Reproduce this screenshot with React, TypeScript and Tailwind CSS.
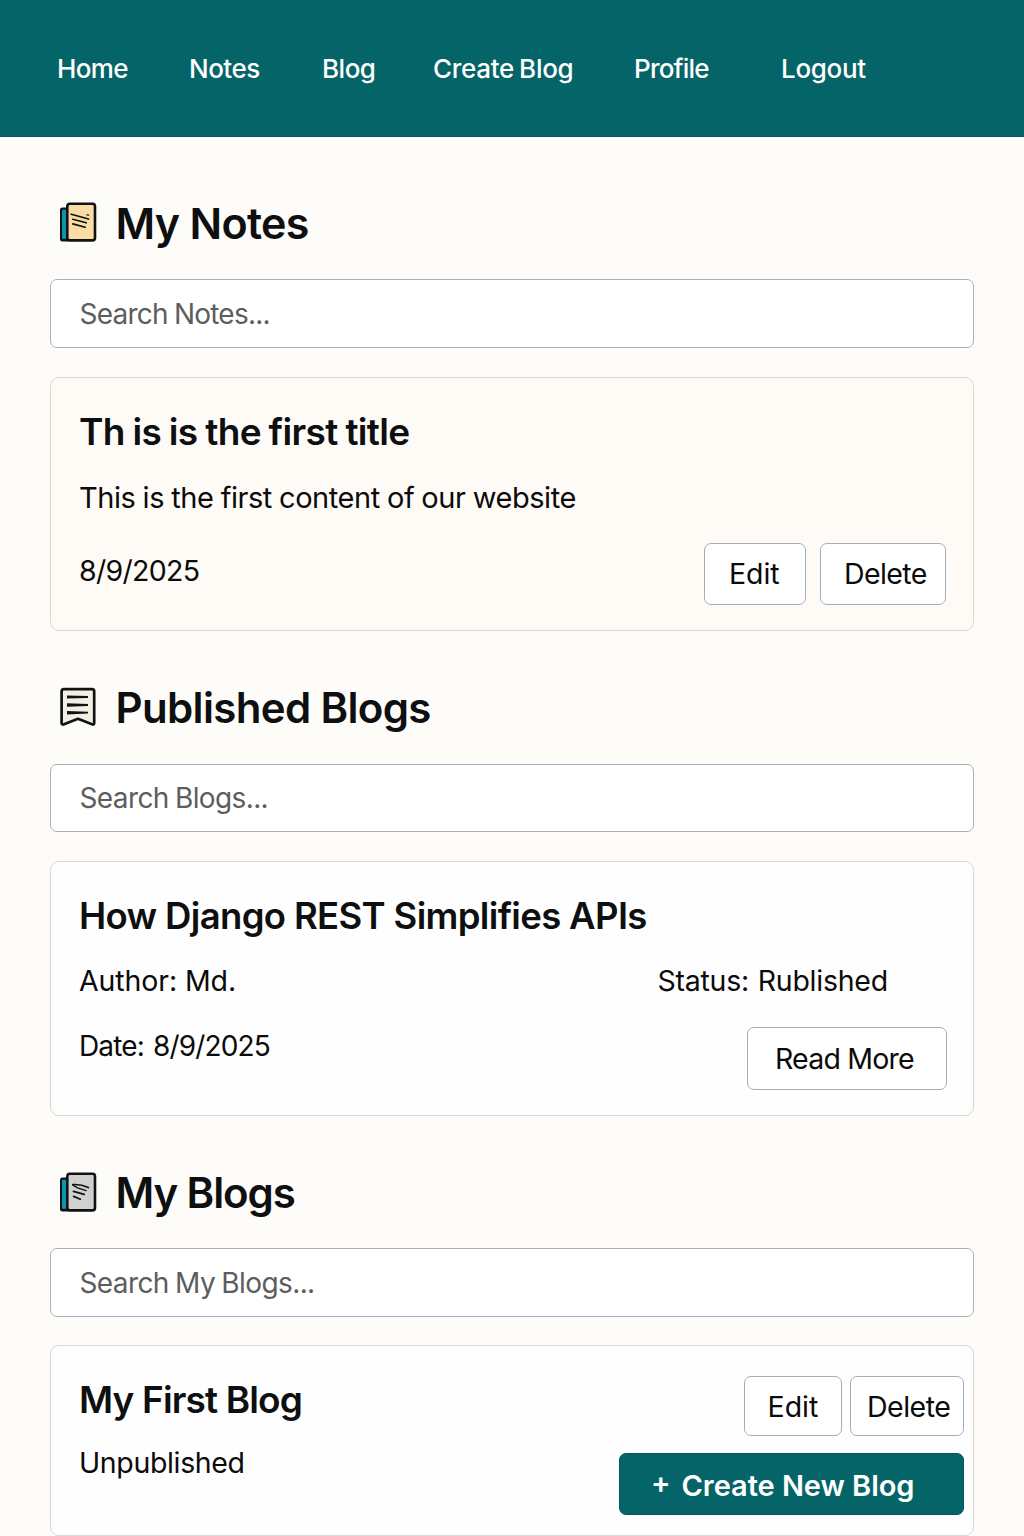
import type { ReactNode } from "react";

function NotebookIcon({ cover, children }: { cover: string; children: ReactNode }) {
  return (
    <svg viewBox="0 0 56 56" className="size-14 shrink-0" fill="none" aria-hidden="true">
      <rect x="10" y="12.5" width="10" height="34" rx="2.5" fill="#101314" />
      <rect x="12" y="14.8" width="4" height="29" rx="0.5" fill="#0f94ae" />
      <rect x="17.3" y="8.8" width="27.7" height="36.6" rx="2.6" fill={cover} stroke="#101314" strokeWidth="2.6" />
      <g stroke="#101314" strokeWidth="1.7" strokeLinecap="round">
        {children}
      </g>
    </svg>
  );
}

function NotesIcon() {
  return (
    <NotebookIcon cover="#fadda4">
      <path d="M21.2 19.2 38.6 24" />
      <path d="M22.8 24.3 36.2 27.8" />
      <path d="M22.8 28.9 35.2 32.2" />
      <path d="M37 19.8 38.6 20.1" strokeWidth="1.3" />
    </NotebookIcon>
  );
}

function MyBlogsIcon() {
  return (
    <NotebookIcon cover="#d0d0d1">
      <path d="M22.8 19.6C27 19.2 34 20.6 38.4 22.6" />
      <path d="M23 20.2 27 22.6 36 25.6" strokeWidth="1.5" />
      <path d="M23.4 26.4 34.2 29.4" />
      <path d="M23.6 31.4 30.4 34.2" />
    </NotebookIcon>
  );
}

function PublishedIcon() {
  return (
    <svg viewBox="0 0 56 56" className="size-14 shrink-0" fill="none" aria-hidden="true">
      <path
        d="M14 9.2H42Q44.2 9.2 44.2 11.4V43Q44.2 45.2 42 44.3L28 38.8 14 44.3Q11.6 45.2 11.6 43V11.4Q11.6 9.2 14 9.2Z"
        fill="#f5eee4"
        stroke="#101314"
        strokeWidth="2.7"
        strokeLinejoin="round"
      />
      <g fill="#101314">
        <path d="M17 15.4 38 16V18L17 18.6Z" />
        <path d="M17 23.2 38 24V26L17 26.8Z" />
        <path d="M17 31 38 31.8V33.6L17 34.4Z" />
      </g>
    </svg>
  );
}

const navItems = [
  { label: "Home", style: "w-[132px] tracking-[-0.6px]" },
  { label: "Notes", style: "w-[133px] tracking-[-0.5px]" },
  { label: "Blog", style: "w-[111px] tracking-[-0.5px]" },
  { label: "Create Blog", style: "w-[201px] tracking-[-0.3px] [word-spacing:-1.5px]" },
  { label: "Profile", style: "w-[147px] tracking-[-0.8px]" },
  { label: "Logout", style: "tracking-[-0.3px]" },
];

function SectionHeading({ icon, title, className }: { icon: ReactNode; title: string; className: string }) {
  return (
    <div className="flex h-12 items-center gap-[9.5px]">
      {icon}
      <h2 className={`font-semibold text-[#0e0f10] ${className}`}>{title}</h2>
    </div>
  );
}

function SearchBox({ placeholder, className }: { placeholder: string; className: string }) {
  return (
    <input
      type="text"
      placeholder={placeholder}
      className={`block w-full rounded-[7px] border border-[#a5b3bf] bg-white pl-[28.5px] text-[28px] [word-spacing:-1px] placeholder:text-[#5d5d5d] ${className}`}
    />
  );
}

function OutlineButton({ children, className }: { children: ReactNode; className: string }) {
  return (
    <button className={`rounded-[7px] border border-[#a0afbc] bg-white text-left text-[28.5px] text-[#0b0b0b] ${className}`}>
      {children}
    </button>
  );
}

export default function App() {
  return (
    <div className="h-[1536px] w-[1024px] overflow-hidden bg-[#fefcf8] font-['Inter','Liberation_Sans',sans-serif] whitespace-nowrap text-[#0b0b0b]">
      <header className="h-[137px] border-b border-[#04575c] bg-[#056468]">
        <nav className="flex h-[137px] items-center pl-[57px] text-[26px] font-medium text-white">
          {navItems.map((item) => (
            <a key={item.label} href="#" className={item.style}>
              {item.label}
            </a>
          ))}
        </nav>
      </header>

      <main className="px-[50px]">
        <section className="pt-[62px]">
          <SectionHeading icon={<NotesIcon />} title="My Notes" className="text-[43px] tracking-[-0.7px]" />
          <SearchBox placeholder="Search Notes..." className="mt-8 h-[69px] tracking-[-0.77px]" />
          <article className="mt-[29px] h-[254px] rounded-[9px] border border-[#ded6cf] bg-[#fefbf7] pr-[27px] pl-7 pt-8">
            <h3 className="text-[37px] leading-[44px] font-semibold tracking-[-0.65px] text-[#0e0f10] [word-spacing:-1px]">Th is is the first title</h3>
            <p className="mt-[26px] text-[29px] leading-9 tracking-[-0.45px] [word-spacing:-0.5px]">This is the first content of our website</p>
            <div className="mt-[27px] flex items-start justify-between">
              <p className="mt-[10px] text-[28.5px] leading-9 tracking-[-0.7px]">8/9/2025</p>
              <div className="flex gap-3.5">
                <OutlineButton className="h-[62px] w-[102px] pl-6 tracking-[-0.1px]">Edit</OutlineButton>
                <OutlineButton className="h-[62px] w-[126px] pl-[23px] tracking-[-0.6px]">Delete</OutlineButton>
              </div>
            </div>
          </article>
        </section>

        <section className="pt-[53px]">
          <SectionHeading icon={<PublishedIcon />} title="Published Blogs" className="text-[42px] leading-[50px] tracking-[-0.65px]" />
          <SearchBox placeholder="Search Blogs..." className="mt-8 h-[68px] tracking-[-0.62px]" />
          <article className="mt-[29px] h-[255px] rounded-[9px] border border-[#ded6cf] bg-[#fffefe] pr-[26px] pl-7 pt-8">
            <h3 className="text-[36.5px] leading-[44px] font-semibold tracking-[-0.66px] text-[#0e0f10]">How Django REST Simplifies APIs</h3>
            <div className="mt-[25px] flex text-[28.5px] leading-9">
              <p className="w-[578.5px] tracking-[-0.1px]">Author: Md.</p>
              <p className="tracking-[-0.25px] [word-spacing:1px]">Status: Rublished</p>
            </div>
            <div className="mt-7 flex items-start justify-between">
              <p className="mt-px text-[28px] leading-9 tracking-[-0.85px] [word-spacing:2px]">Date: 8/9/2025</p>
              <OutlineButton className="h-[63px] w-[200px] pt-0.5 pl-[27px] tracking-[-0.8px]">Read More</OutlineButton>
            </div>
          </article>
        </section>

        <section className="pt-[53px]">
          <SectionHeading icon={<MyBlogsIcon />} title="My Blogs" className="text-[42px] leading-[50px] tracking-[-1.1px]" />
          <SearchBox placeholder="Search My Blogs..." className="mt-[31px] h-[69px] tracking-[-0.6px]" />
          <article className="mt-7 flex h-[191px] justify-between rounded-[9px] border border-[#ded6cf] bg-[#fffefe] pr-[9px] pl-7">
            <div className="pt-8">
              <h3 className="text-[37px] leading-[44px] font-semibold tracking-[-0.85px] text-[#0e0f10]">My First Blog</h3>
              <p className="mt-[23px] text-[28.5px] leading-9 tracking-[-0.35px]">Unpublished</p>
            </div>
            <div className="flex flex-col items-end gap-[17px] pt-[30px]">
              <div className="flex gap-2">
                <OutlineButton className="h-[60px] w-[98px] pt-0.5 pl-[22.5px] tracking-[0px]">Edit</OutlineButton>
                <OutlineButton className="h-[60px] w-[114px] pt-0.5 pl-4 tracking-[-0.5px]">Delete</OutlineButton>
              </div>
              <button className="flex h-[62px] w-[345px] items-center gap-[11px] rounded-[7px] border border-[#04575c] bg-[#056468] pt-[3px] pl-[31px] text-[29px] font-semibold text-white">
                <span className="-mt-[5px]">+</span>
                <span className="tracking-[-0.05px]">Create New Blog</span>
              </button>
            </div>
          </article>
        </section>
      </main>
    </div>
  );
}
